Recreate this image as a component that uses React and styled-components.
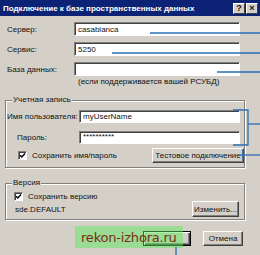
import React from 'react';
import styled, { createGlobalStyle } from 'styled-components';

const Global = createGlobalStyle`
  html, body { margin: 0; padding: 0; background: #d4d0c8; }
  body { font-family: "Liberation Sans", Arial, sans-serif; font-size: 8px; color: #111; }
`;

const Window = styled.div`
  position: relative;
  width: 260px;
  height: 255px;
  background: #d4d0c8;
  overflow: hidden;
  display: flex;
  flex-direction: column;
`;

const TitleBar = styled.div`
  height: 16px;
  flex: none;
  box-sizing: border-box;
  background: #0c2274;
  display: flex;
  align-items: center;
  padding: 0 2px 0 3px;
`;

const Title = styled.div`
  flex: 1;
  color: #fff;
  font-weight: bold;
  font-size: 8px;
  white-space: nowrap;
`;

const CapBtn = styled.div`
  width: 12px;
  height: 11px;
  box-sizing: border-box;
  margin-left: 1px;
  background: #d4d0c8;
  border: 1px solid;
  border-color: #fff #404040 #404040 #fff;
  font: bold 9px "Liberation Sans", Arial, sans-serif;
  display: flex;
  align-items: center;
  justify-content: center;
  line-height: 1;
`;

const FieldsGrid = styled.div`
  display: grid;
  grid-template-columns: ${p => p.$label}px ${p => p.$input}px;
  row-gap: ${p => p.$gap}px;
  align-items: center;
  margin: ${p => p.$margin};
`;

const Label = styled.div`
  white-space: nowrap;
  padding-left: ${p => p.$indent || 0}px;
  font-size: ${p => p.$size || 8}px;
`;

const Input = styled.div`
  box-sizing: border-box;
  height: ${p => p.$h || 14}px;
  background: #fff;
  border: 1px solid;
  border-color: #808080 #fff #fff #808080;
  box-shadow: inset 1px 1px 0 #404040;
  padding: 0 ${p => p.$pad || 3}px;
  display: flex;
  align-items: ${p => (p.$top ? 'flex-start' : 'center')};
  font-size: 8px;
  white-space: nowrap;
  overflow: hidden;
`;

const Note = styled.div`
  margin: 1px 0 0 78px;
  height: 10px;
  line-height: 10px;
  white-space: nowrap;
`;

const Group = styled.div`
  position: relative;
  box-sizing: border-box;
  width: 240px;
  height: ${p => p.$h}px;
  margin: ${p => p.$mt}px 0 0 5px;
  border: 1px solid #808080;
  box-shadow: inset 1px 1px 0 #fff, 1px 1px 0 #fff;
  padding: ${p => p.$pt}px 0 0 0;
  display: flex;
  flex-direction: column;
`;

const Legend = styled.span`
  position: absolute;
  top: -6px;
  left: 6px;
  padding: 0 1px;
  background: #d4d0c8;
  line-height: 10px;
  white-space: nowrap;
`;

const CheckRow = styled.div`
  display: flex;
  align-items: center;
  height: ${p => p.$h}px;
  margin-top: ${p => p.$mt || 0}px;
  padding-left: ${p => p.$indent}px;
`;

const CheckBox = styled.span`
  width: 9px;
  height: 9px;
  flex: none;
  box-sizing: border-box;
  background: #fff;
  border: 1px solid;
  border-color: #808080 #fff #fff #808080;
  box-shadow: inset 1px 1px 0 #404040;
  display: flex;
  align-items: center;
  justify-content: center;
  margin-right: 5px;
`;

const Spacer = styled.div`
  flex: 1;
`;

const Button = styled.div`
  box-sizing: border-box;
  height: ${p => p.$h || 15}px;
  width: ${p => p.$w}px;
  flex: none;
  background: #d4d0c8;
  border: 1px solid;
  border-color: ${p => (p.$default ? '#000' : '#fff #404040 #404040 #fff')};
  box-shadow: ${p =>
    p.$default
      ? 'inset 1px 1px 0 #fff, inset -1px -1px 0 #404040, inset -2px -2px 0 #808080'
      : 'inset -1px -1px 0 #808080'};
  display: flex;
  align-items: center;
  justify-content: center;
  font-size: 8px;
  white-space: nowrap;
  margin-right: ${p => p.$mr || 0}px;
`;

const BottomRow = styled.div`
  display: flex;
  align-items: center;
  margin: ${p => p.$mt}px 0 0 143px;
`;

const Watermark = styled.div`
  position: absolute;
  left: 75px;
  top: 226px;
  width: 108px;
  height: 22px;
  background: rgba(96, 232, 96, 0.5);
  color: #7a2c14;
  font: 13px "DejaVu Sans", "Liberation Sans", sans-serif;
  letter-spacing: -0.2px;
  display: flex;
  align-items: center;
  padding-left: 6px;
  box-sizing: border-box;
  white-space: nowrap;
`;

const Overlay = styled.svg`
  position: absolute;
  left: 0;
  top: 0;
  pointer-events: none;
`;

const Tick = () => (
  <svg width="7" height="7" viewBox="0 0 7 7">
    <path d="M1 3.2 L2.8 5 L6 1.5" fill="none" stroke="#000" strokeWidth="1.4" />
  </svg>
);

export default function App() {
  const blue = '#2a6fb4';
  return (
    <>
      <Global />
      <Window>
        <TitleBar>
          <Title>Подключение к базе пространственных данных</Title>
          <CapBtn>?</CapBtn>
          <CapBtn>×</CapBtn>
        </TitleBar>

        <FieldsGrid $label={67} $input={166} $gap={6} $margin="6px 0 0 7px">
          <Label>Сервер:</Label>
          <Input>casablanca</Input>
          <Label>Сервис:</Label>
          <Input>5250</Input>
          <Label>База данных:</Label>
          <Input />
        </FieldsGrid>
        <Note>(если поддерживается вашей РСУБД)</Note>

        <Group $h={68} $mt={13} $pt={9}>
          <Legend>Учетная запись</Legend>
          <FieldsGrid $label={73} $input={161} $gap={8} $margin="0">
            <Label $indent={1}>Имя пользователя:</Label>
            <Input $h={13}>myUserName</Input>
            <Label $indent={11}>Пароль:</Label>
            <Input $h={13} $top>**********</Input>
          </FieldsGrid>
          <CheckRow $h={15} $mt={4} $indent={12}>
            <CheckBox><Tick /></CheckBox>
            Сохранить имя/пароль
            <Spacer />
            <Button $w={92} $mr={0}>Тестовое подключение</Button>
          </CheckRow>
        </Group>

        <Group $h={37} $mt={15} $pt={8}>
          <Legend>Версия</Legend>
          <CheckRow $h={9} $indent={8}>
            <CheckBox><Tick /></CheckBox>
            Сохранить версию
          </CheckRow>
          <CheckRow $h={16} $indent={9}>
            sde.DEFAULT
            <Spacer />
            <Button $w={47} $h={16} $mr={5}>Изменить...</Button>
          </CheckRow>
        </Group>

        <BottomRow $mt={11}>
          <Button $w={48} $default $mr={12} />
          <Button $w={40}>Отмена</Button>
        </BottomRow>

        <Watermark>rekon-izhora.ru</Watermark>

        <Overlay width="260" height="255" viewBox="0 0 260 255">
          <g stroke={blue} strokeWidth="1.3" fill="none">
            <path d="M150 33 H260" />
            <path d="M112 53 H260" />
            <path d="M217 72 H260" />
            <path d="M233 110 H248 V145 H233" />
            <path d="M248 124 H260" />
            <path d="M240 155 H260" />
            <path d="M243 149 V160" />
            <path d="M176 247 V255" />
          </g>
        </Overlay>
      </Window>
    </>
  );
}
